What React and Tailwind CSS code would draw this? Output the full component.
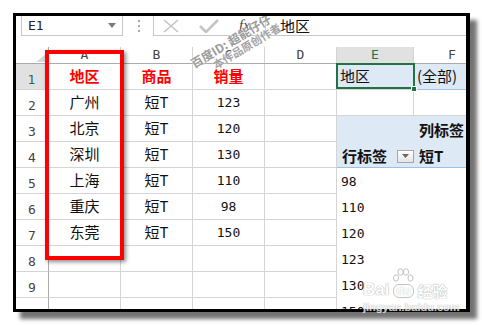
import { Fragment } from 'react'

const CJK = "font-['Noto_Sans_CJK_SC',sans-serif]"
const MONO = "font-['DejaVu_Sans_Mono','Noto_Sans_CJK_SC',monospace]"

const GRID = 'border-r border-b border-[#d4d4d4]'

const DATA = [
  ['广州', '短T', '123'],
  ['北京', '短T', '120'],
  ['深圳', '短T', '130'],
  ['上海', '短T', '110'],
  ['重庆', '短T', '98'],
  ['东莞', '短T', '150'],
]

const PIVOT = ['98', '110', '120', '123', '130', '150']

function FormulaBar() {
  return (
    <div className="flex h-[31px] items-start">
      {/* name box */}
      <div className="ml-[5px] flex h-[20px] w-[102px] items-center justify-between border-x border-b border-[#c6c6c6] pl-[6px] pr-[6px]">
        <span className={`${MONO} text-[13px] text-[#222]`}>E1</span>
        <svg width="8" height="5" viewBox="0 0 8 5">
          <polygon points="0,0 8,0 4,5" fill="#7a7a7a" />
        </svg>
      </div>
      <div className="flex h-[20px] w-[30px] flex-col items-center justify-center gap-[3px] pl-[1px]">
        <span className="h-[2px] w-[2px] bg-[#a8a8a8]" />
        <span className="h-[2px] w-[2px] bg-[#a8a8a8]" />
        <span className="h-[2px] w-[2px] bg-[#a8a8a8]" />
      </div>
      {/* cancel / enter / fx */}
      <div className="flex h-[20px] w-[113px] items-center border-x border-b border-[#c6c6c6]">
        <svg width="16" height="14" viewBox="0 0 16 14" className="ml-[9px]">
          <path d="M1 1 L15 13 M15 1 L1 13" stroke="#c4c4c4" strokeWidth="1.6" fill="none" />
        </svg>
        <svg width="20" height="14" viewBox="0 0 20 14" className="ml-[20px]">
          <path d="M1 7 L7 13 L19 1" stroke="#c4c4c4" strokeWidth="2.6" fill="none" />
        </svg>
        <span className="ml-[20px] font-['Liberation_Serif',serif] text-[15px] italic text-[#444]">fx</span>
      </div>
      <div className="flex h-[20px] flex-1 items-center border-b border-[#c6c6c6] pl-[14px]">
        <span className={`${CJK} text-[15px] leading-none text-[#111]`}>地区</span>
      </div>
    </div>
  )
}

function HeaderRow() {
  const letters = [
    ['A', 'w-[72px]', ''],
    ['B', 'w-[72px]', ''],
    ['C', 'w-[72px]', ''],
    ['D', 'w-[72px]', ''],
    ['E', 'w-[77px]', 'bg-[#e1e1e1] text-[#217346]'],
    ['F', 'w-[77px]', ''],
  ]
  return (
    <div className="flex h-[17px] border-b border-[#ababab]">
      <div className="flex w-[33px] shrink-0 items-end justify-end border-r border-[#ababab] pb-[1px] pr-[1px]">
        <svg width="11" height="9" viewBox="0 0 11 9">
          <polygon points="11,0 11,9 0,9" fill="#d9d9d9" />
        </svg>
      </div>
      {letters.map(([l, w, extra]) => (
        <div
          key={l}
          className={`${w} ${extra} flex shrink-0 items-center justify-center border-r border-[#d4d4d4] ${MONO} text-[13px] text-[#444]`}
        >
          {l}
        </div>
      ))}
    </div>
  )
}

function RowHead({ n, active }) {
  return (
    <div
      className={`flex w-[33px] shrink-0 items-end justify-center border-b border-[#d4d4d4] pb-[3px] ${MONO} text-[13px] leading-none ${
        active ? 'border-r-2 border-r-[#217346] bg-[#e1e1e1] text-[#217346]' : 'border-r border-r-[#ababab] text-[#444]'
      }`}
    >
      {n}
    </div>
  )
}

function Cell({ children, className = '' }) {
  return (
    <div className={`flex w-[72px] shrink-0 items-center justify-center ${GRID} ${className}`}>{children}</div>
  )
}

function Sheet() {
  return (
    <div>
      <HeaderRow />

      {/* row 1 */}
      <div className="flex h-[26px]">
        <RowHead n="1" active />
        {['地区', '商品', '销量'].map((t) => (
          <Cell key={t} className={`${CJK} text-[15px] font-bold text-[#ff0000]`}>
            {t}
          </Cell>
        ))}
        <Cell />
        <div className="relative flex w-[77px] shrink-0 items-center border-b border-[#d4d4d4] bg-[#dde9f5] pl-[3px]">
          <span className={`${CJK} text-[15px] text-[#111]`}>地区</span>
          <div className="absolute -left-px -right-px -top-px bottom-0 border-2 border-[#217346]" />
          <div className="absolute bottom-[-3px] right-[-3px] h-[6px] w-[6px] border border-white bg-[#217346]" />
        </div>
        <div className="flex w-[77px] shrink-0 items-center border-b border-[#9bc2e6] bg-[#dde9f5] pl-[3px]">
          <span className={`${CJK} whitespace-nowrap text-[15px] text-[#111]`}>(全部)</span>
        </div>
      </div>

      {[2, 3, 4, 5, 6, 7, 8, 9, 10].map((n) => {
        const d = DATA[n - 2]
        return (
          <div key={n} className="flex h-[26px]">
            <RowHead n={n} />
            <Cell className={`${CJK} text-[15px] text-[#111]`}>{d && d[0]}</Cell>
            <Cell className={`${CJK} text-[15px] text-[#111]`}>{d && d[1]}</Cell>
            <Cell className={`${MONO} text-[13px] text-[#111]`}>{d && d[2]}</Cell>
            <Cell />
            {n === 2 && (
              <Fragment>
                <div className={`w-[77px] shrink-0 ${GRID}`} />
                <div className={`w-[77px] shrink-0 ${GRID}`} />
              </Fragment>
            )}
            {n === 3 && (
              <Fragment>
                <div className="w-[77px] shrink-0 bg-[#dde9f5]" />
                <div className="flex w-[77px] shrink-0 items-center bg-[#dde9f5] pl-[5px] pt-[3px]">
                  <span className={`${CJK} whitespace-nowrap text-[15px] font-bold text-[#111]`}>列标签</span>
                </div>
              </Fragment>
            )}
            {n === 4 && (
              <Fragment>
                <div className="flex w-[77px] shrink-0 items-center justify-between border-b border-[#9bc2e6] bg-[#dde9f5] pl-[5px] pt-[3px]">
                  <span className={`${CJK} whitespace-nowrap text-[15px] font-bold text-[#111]`}>行标签</span>
                  <span className="flex h-[13px] w-[17px] items-center justify-center border border-[#a6a6a6] bg-gradient-to-b from-white to-[#e4e4e4]">
                    <svg width="7" height="4" viewBox="0 0 7 4">
                      <polygon points="0,0 7,0 3.5,4" fill="#666" />
                    </svg>
                  </span>
                </div>
                <div className="flex w-[77px] shrink-0 items-center border-b border-[#9bc2e6] bg-[#dde9f5] pl-[5px] pt-[3px]">
                  <span className={`${CJK} whitespace-nowrap text-[15px] font-bold text-[#111]`}>短T</span>
                </div>
              </Fragment>
            )}
            {n >= 5 && (
              <div className={`flex w-[77px] shrink-0 items-center pl-[4px] pt-[2px] ${MONO} text-[13px] text-[#111]`}>
                {PIVOT[n - 5]}
              </div>
            )}
          </div>
        )
      })}
    </div>
  )
}

export default function App() {
  return (
    <div className="relative h-[325px] w-[482px] overflow-hidden bg-white pl-[13px] pt-[13px]">
      <div className="relative h-[299px] w-[457px] overflow-hidden border-[3px] border-r-4 border-black bg-white shadow-[7px_7px_4px_rgba(0,0,0,0.55)]">
        <FormulaBar />
        <Sheet />

        {/* red highlight around column A */}
        <div className="absolute left-[29px] top-[34px] h-[210px] w-[79px] border-4 border-[#ff0000] shadow-[2px_2px_4px_rgba(0,0,0,0.45)]" />

        {/* author watermark */}
        <div className="absolute left-[172px] top-[16px] rotate-[-31deg] leading-[13px]">
          <div className={`${CJK} whitespace-nowrap text-[12px] font-bold text-[#9a9a9a] [text-shadow:0_0_2px_#fff]`}>
            百度ID: 超能仔仔
          </div>
          <div className={`${CJK} ml-[18px] whitespace-nowrap text-[11px] font-bold text-[#a4a4a4] [text-shadow:0_0_2px_#fff]`}>
            本作品原创作者
          </div>
        </div>
      </div>

      {/* baidu jingyan watermark */}
      <div className="absolute left-[363px] top-[268px] flex flex-col items-start opacity-80">
        <div className="flex items-end gap-[3px] leading-none">
          <span className="font-['Liberation_Sans',sans-serif] text-[17px] font-bold text-white [text-shadow:0_0_1px_#9a9a9a,0_0_1px_#9a9a9a]">
            Bai
          </span>
          <span className="flex flex-col items-center">
            <svg width="22" height="16" viewBox="0 0 22 16">
              <g fill="white" stroke="#b5b5b5" strokeWidth="1">
                <ellipse cx="4" cy="10" rx="2.5" ry="3.2" />
                <ellipse cx="8.5" cy="4" rx="2.6" ry="3.3" />
                <ellipse cx="14" cy="4" rx="2.6" ry="3.3" />
                <ellipse cx="18.5" cy="10" rx="2.5" ry="3.2" />
              </g>
            </svg>
            <span className="rounded-[6px] border border-[#b5b5b5] px-[2px] font-['Liberation_Sans',sans-serif] text-[12px] font-bold leading-[12px] text-white [text-shadow:0_0_1px_#9a9a9a]">
              du
            </span>
          </span>
          <span className={`${CJK} text-[15px] font-bold text-white [text-shadow:0_0_1px_#9a9a9a,0_0_1px_#9a9a9a]`}>
            经验
          </span>
        </div>
        <div className="mt-[4px] font-['Liberation_Sans',sans-serif] text-[11px] font-bold leading-none text-[#f4f4f4] [text-shadow:0_0_1px_#8a8a8a]">
          jingyan.baidu.com
        </div>
      </div>
    </div>
  )
}
